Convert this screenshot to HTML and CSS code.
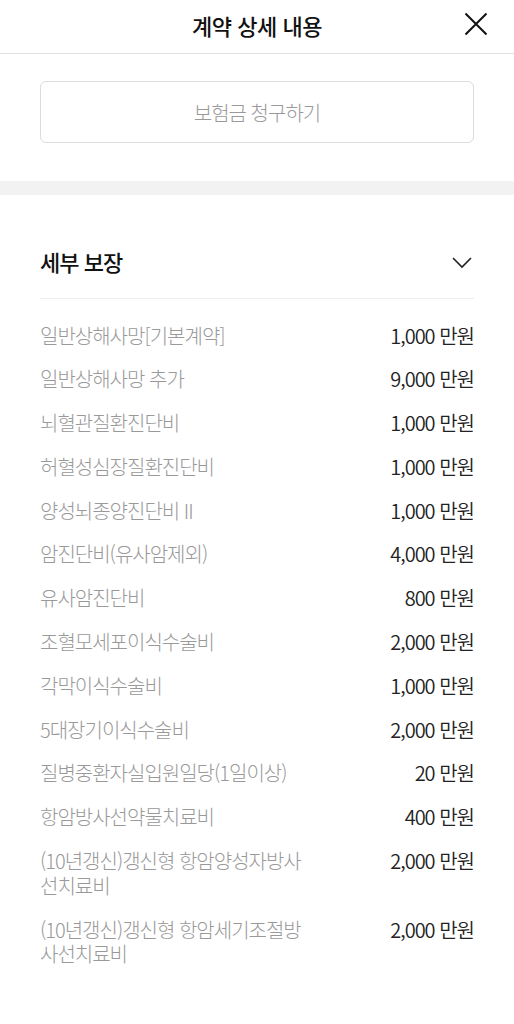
FILE: index.html
```html
<!DOCTYPE html>
<html lang="ko">
<head>
<meta charset="utf-8">
<link rel="stylesheet" href="styles.css">
</head>
<body>
<header class="header">
  <h1 class="title">계약 상세 내용</h1>
  <button class="close" aria-label="닫기">
    <svg width="24" height="24" viewBox="0 0 24 24"><path d="M1.5 1.5 L22.5 22.5 M22.5 1.5 L1.5 22.5" stroke="#111" stroke-width="2" fill="none"/></svg>
  </button>
</header>
<section class="claim">
  <button class="claim-btn">보험금 청구하기</button>
</section>
<div class="band"></div>
<section class="detail">
  <div class="detail-head">
    <h2 class="detail-title">세부 보장</h2>
    <svg class="chev" width="20" height="12" viewBox="0 0 20 12"><path d="M1 1 L10 10 L19 1" stroke="#222" stroke-width="1.6" fill="none"/></svg>
  </div>
  <ul class="list">
    <li class="row"><span class="label">일반상해사망[기본계약]</span><span class="value">1,000 만원</span></li>
    <li class="row"><span class="label">일반상해사망 추가</span><span class="value">9,000 만원</span></li>
    <li class="row"><span class="label">뇌혈관질환진단비</span><span class="value">1,000 만원</span></li>
    <li class="row"><span class="label">허혈성심장질환진단비</span><span class="value">1,000 만원</span></li>
    <li class="row"><span class="label">양성뇌종양진단비 II</span><span class="value">1,000 만원</span></li>
    <li class="row"><span class="label">암진단비(유사암제외)</span><span class="value">4,000 만원</span></li>
    <li class="row"><span class="label">유사암진단비</span><span class="value">800 만원</span></li>
    <li class="row"><span class="label">조혈모세포이식수술비</span><span class="value">2,000 만원</span></li>
    <li class="row"><span class="label">각막이식수술비</span><span class="value">1,000 만원</span></li>
    <li class="row"><span class="label">5대장기이식수술비</span><span class="value">2,000 만원</span></li>
    <li class="row"><span class="label">질병중환자실입원일당(1일이상)</span><span class="value">20 만원</span></li>
    <li class="row"><span class="label">항암방사선약물치료비</span><span class="value">400 만원</span></li>
    <li class="row"><span class="label">(10년갱신)갱신형 항암양성자방사선치료비</span><span class="value">2,000 만원</span></li>
    <li class="row"><span class="label">(10년갱신)갱신형 항암세기조절방사선치료비</span><span class="value">2,000 만원</span></li>
  </ul>
</section>
</body>
</html>
```
FILE: styles.css
```css
* { box-sizing: border-box; }
html, body { margin: 0; padding: 0; background: #fff; }
body {
  font-family: "Noto Sans CJK KR", "Noto Sans", sans-serif;
  color: #222;
  letter-spacing: -1px;
}
.header {
  height: 54px;
  border-bottom: 1px solid #e2e2e2;
  display: flex;
  align-items: center;
  justify-content: center;
  position: relative;
}
.title {
  margin: 0 0 3px;
  font-size: 22px;
  line-height: 30px;
  font-weight: 500;
  letter-spacing: -0.5px;
  color: #111;
}
.close {
  position: absolute;
  right: 26px;
  top: 12px;
  width: 24px;
  height: 24px;
  padding: 0;
  border: 0;
  background: none;
  display: flex;
}
.claim {
  padding: 27px 40px 38px;
}
.claim-btn {
  width: 100%;
  height: 62px;
  border: 1px solid #dcdcdc;
  border-radius: 6px;
  background: #fff;
  font-family: inherit;
  font-size: 20px;
  font-weight: 300;
  letter-spacing: -1px;
  color: #999;
}
.band {
  height: 14px;
  background: #f2f2f2;
}
.detail {
  padding: 0 40px;
}
.detail-head {
  height: 104px;
  padding-top: 51px;
  display: flex;
  align-items: flex-start;
  justify-content: space-between;
  border-bottom: 1px solid #eee;
}
.detail-title {
  margin: 0;
  font-size: 22px;
  line-height: 30px;
  font-weight: 500;
  color: #111;
}
.chev { margin-top: 11px; margin-right: 2px; }
.list {
  list-style: none;
  margin: 0;
  padding: 24.5px 0 0;
  display: flex;
  flex-direction: column;
  gap: 19px;
}
.row {
  display: flex;
  justify-content: space-between;
  align-items: flex-start;
  font-size: 20px;
  line-height: 24.8px;
}
.label {
  color: #999;
  font-weight: 300;
  max-width: 266px;
}
.value {
  color: #222;
  font-weight: 350;
  white-space: nowrap;
}
```
